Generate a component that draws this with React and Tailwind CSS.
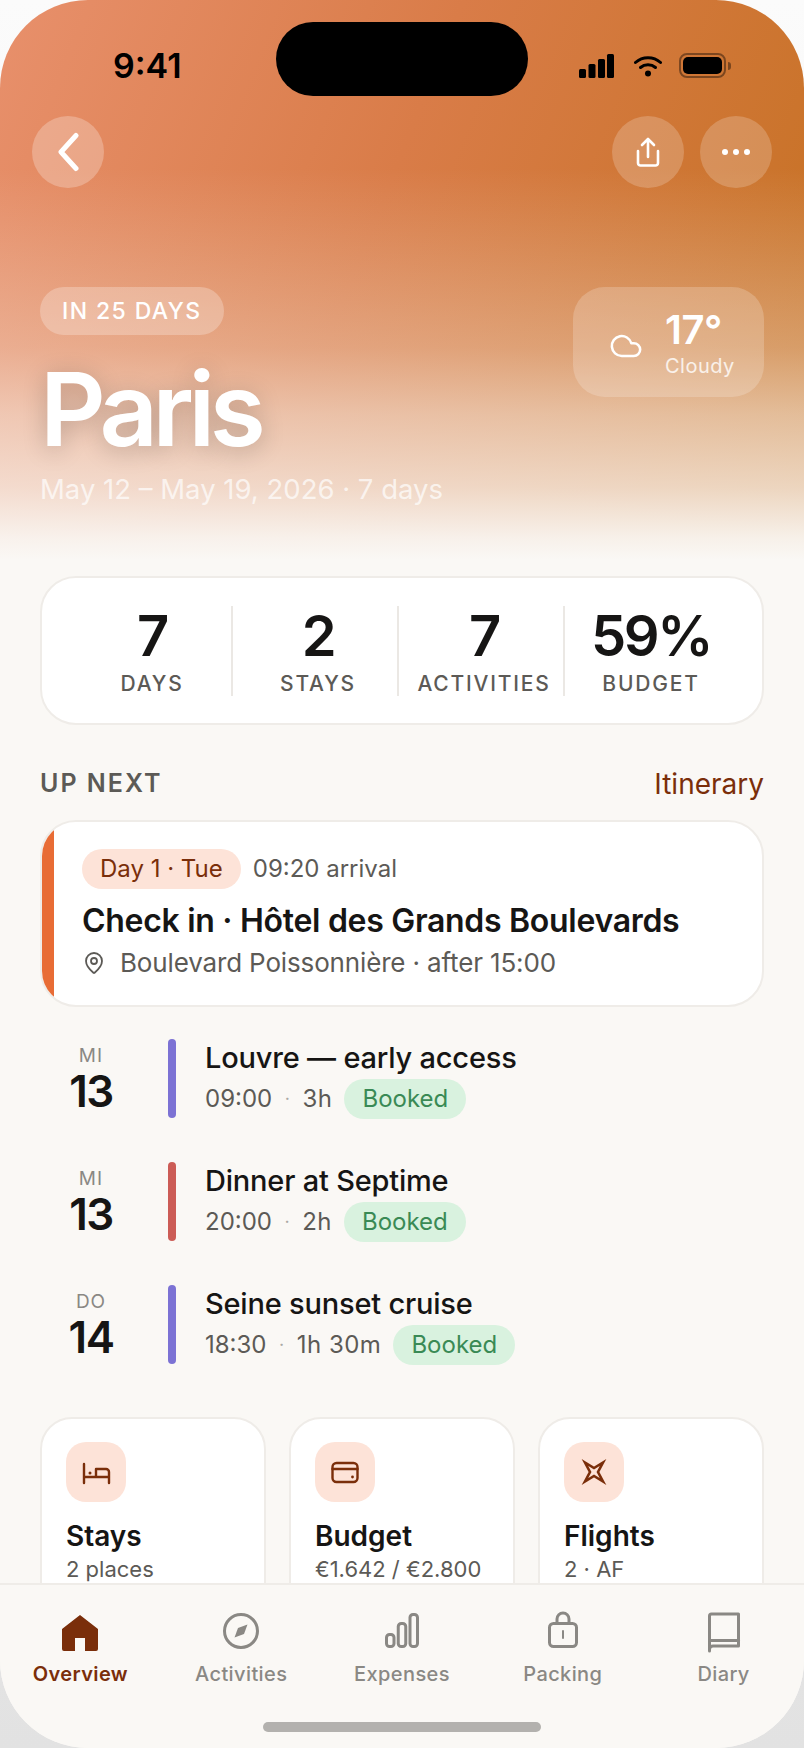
import React from 'react';
import { Cloud, MapPin } from 'lucide-react';

const stats = [
  { value: '7', label: 'DAYS' },
  { value: '2', label: 'STAYS' },
  { value: '7', label: 'ACTIVITIES' },
  { value: '59%', label: 'BUDGET' },
];

const plans = [
  { dow: 'MI', day: '13', title: 'Louvre — early access', time: '09:00', length: '3h', bar: 'bg-[#7c72d4]' },
  { dow: 'MI', day: '13', title: 'Dinner at Septime', time: '20:00', length: '2h', bar: 'bg-[#cc5c56]' },
  { dow: 'DO', day: '14', title: 'Seine sunset cruise', time: '18:30', length: '1h 30m', bar: 'bg-[#7c72d4]' },
];

const BedIcon = () => (
  <svg width="32" height="32" viewBox="0 0 32 32" fill="none" stroke="#7a2e0a" strokeWidth="2.4" strokeLinecap="round" strokeLinejoin="round">
    <path d="M4 8v19M4 21h25M29 27V16a3 3 0 0 0-3-3H16v8" />
    <circle cx="10" cy="17" r="1.5" fill="#7a2e0a" stroke="none" />
  </svg>
);

const WalletIcon = () => (
  <svg width="32" height="32" viewBox="0 0 32 32" fill="none" stroke="#7a2e0a" strokeWidth="2.4" strokeLinecap="round">
    <rect x="3.500" y="7" width="25" height="19" rx="4" />
    <path d="M3.500 13h25" />
    <circle cx="23.500" cy="21" r="1.4" fill="#7a2e0a" stroke="none" />
  </svg>
);

const StarIcon = () => (
  <svg width="32" height="32" viewBox="0 0 32 32" fill="none" stroke="#7a2e0a" strokeWidth="2.6" strokeLinejoin="miter">
    <path d="M7 6.500 L16 12 L25 6.500 L20 16 L25 25.500 L16 20 L7 25.500 L12 16 Z" />
  </svg>
);

const tileIcons = { bed: BedIcon, wallet: WalletIcon, star: StarIcon };

const tiles = [
  { title: 'Stays', sub: '2 places', icon: 'bed' },
  { title: 'Budget', sub: '€1.642 / €2.800', icon: 'wallet' },
  { title: 'Flights', sub: '2 · AF', icon: 'star' },
];

const HomeIcon = () => (
  <svg width="44" height="44" viewBox="0 0 44 44" fill="#7a2e0a">
    <path d="M22 6 L40 20 V40 a2 2 0 0 1-2 2 H27 V29 H17 V42 H6 a2 2 0 0 1-2-2 V20 Z" />
  </svg>
);

const CompassIcon = () => (
  <svg width="44" height="44" viewBox="0 0 44 44" fill="none" stroke="#8a8884" strokeWidth="3">
    <circle cx="22" cy="22" r="16.500" />
    <path d="M28.500 15.500 L25 25 L15.500 28.500 L19 19 Z" fill="#8a8884" stroke="none" />
  </svg>
);

const BarsIcon = () => (
  <svg width="44" height="44" viewBox="0 0 44 44" fill="none" stroke="#8a8884" strokeWidth="3">
    <rect x="6.500" y="25.500" width="7.500" height="12" rx="3" />
    <rect x="18.250" y="14.500" width="7.500" height="23" rx="3" />
    <rect x="30" y="5.500" width="7.500" height="32" rx="3" />
  </svg>
);

const PackIcon = () => (
  <svg width="44" height="44" viewBox="0 0 44 44" fill="none" stroke="#8a8884" strokeWidth="3" strokeLinecap="round">
    <rect x="8.500" y="14.500" width="27" height="23" rx="4" />
    <path d="M16 14v-4a6 6 0 0 1 12 0v4" />
    <path d="M22 22v7" strokeWidth="2" />
  </svg>
);

const BookIcon = () => (
  <svg width="44" height="44" viewBox="0 0 44 44" fill="none" stroke="#8a8884" strokeWidth="3" strokeLinecap="round" strokeLinejoin="round">
    <path d="M7.500 42V7a2 2 0 0 1 2-2h27v32H11a3.500 3.500 0 0 0-3.500 3.500" />
    <path d="M8 31.500h28.500" />
  </svg>
);

const tabs = [
  { label: 'Overview', Icon: HomeIcon, active: true },
  { label: 'Activities', Icon: CompassIcon },
  { label: 'Expenses', Icon: BarsIcon },
  { label: 'Packing', Icon: PackIcon },
  { label: 'Diary', Icon: BookIcon },
];

const StatusIcons = () => (
  <div className="flex items-center gap-[20px]">
    <svg width="35" height="24" viewBox="0 0 35 24" fill="#000">
      <rect x="0" y="15" width="7" height="9" rx="1.500" />
      <rect x="9.500" y="10" width="7" height="14" rx="1.500" />
      <rect x="19" y="5" width="7" height="19" rx="1.500" />
      <rect x="28" y="0" width="7" height="24" rx="1.500" />
    </svg>
    <svg width="28" height="22" viewBox="0 0 28 22" fill="none" stroke="#000" strokeWidth="3" strokeLinecap="round">
      <path d="M1.500 7.500C8.500 1 19.500 1 26.500 7.500" />
      <path d="M6.500 12.500c4.200-3.600 10.800-3.600 15 0" />
      <circle cx="14" cy="18.500" r="3" fill="#000" stroke="none" />
    </svg>
    <div className="flex items-center gap-[2px] -ml-[3px]">
      <div className="w-[47px] h-[25px] rounded-[8px] border-2 border-black/40 p-[2px]">
        <div className="w-full h-full rounded-[5px] bg-black" />
      </div>
      <div className="w-[3px] h-[8px] rounded-r-sm bg-black/40" />
    </div>
  </div>
);

const RoundButton = ({ children, className }) => (
  <button className={`w-[72px] h-[72px] rounded-full flex items-center justify-center ${className}`}>{children}</button>
);

const Hero = () => (
  <div className="relative h-[560px] bg-[linear-gradient(180deg,rgba(250,248,245,0)_30%,rgba(250,248,245,0.32)_62%,rgba(250,248,245,0.56)_74%,rgba(250,248,245,0.74)_87%,rgba(250,248,245,0.94)_96%,#faf8f5_100%),linear-gradient(112deg,#e8906c_0%,#d97c48_45%,#c4701f_100%)]">
    <div className="absolute left-[276px] top-[22px] w-[252px] h-[74px] rounded-[37px] bg-black" />
    <div className="h-[116px] flex items-start justify-between pl-[113px] pr-[73px] pt-[46px]">
      <span className="text-[34px] leading-[40px] font-semibold text-black">9:41</span>
      <div className="pt-[7px]">
        <StatusIcons />
      </div>
    </div>
    <div className="flex items-center justify-between px-8">
      <RoundButton className="bg-white/25">
        <svg width="26" height="40" viewBox="0 0 26 40" fill="none" stroke="#fff" strokeWidth="5" strokeLinecap="round" strokeLinejoin="round">
          <path d="M21 3.500 L6 20 L21 36.500" />
        </svg>
      </RoundButton>
      <div className="flex gap-4">
        <RoundButton className="bg-white/20">
          <svg width="24" height="30" viewBox="0 0 24 30" fill="none" stroke="#fff" strokeWidth="2.600" strokeLinecap="round" strokeLinejoin="round">
            <path d="M12 20V2M6 8l6-6 6 6" />
            <path d="M2 14v12a2.500 2.500 0 0 0 2.500 2.500h15A2.500 2.500 0 0 0 22 26V14" />
          </svg>
        </RoundButton>
        <RoundButton className="bg-white/20 gap-[5px]">
          <span className="w-[6px] h-[6px] rounded-full bg-white" />
          <span className="w-[6px] h-[6px] rounded-full bg-white" />
          <span className="w-[6px] h-[6px] rounded-full bg-white" />
        </RoundButton>
      </div>
    </div>
    <div className="flex items-start justify-between px-10 mt-[99px]">
      <div>
        <div className="inline-flex items-center h-[48px] px-[22px] rounded-[24px] bg-white/25 text-white text-[23px] font-medium tracking-[1.400px]">
          IN 25 DAYS
        </div>
        <h1 className="mt-[18px] text-[102px] leading-[112px] font-semibold tracking-[-5.500px] text-white [text-shadow:0_4px_24px_rgba(0,0,0,0.22)]">Paris</h1>
        <p className="mt-[7px] text-[27.500px] leading-[34px] text-white/70">May 12 – May 19, 2026 · 7 days</p>
      </div>
      <div className="w-[191px] h-[110px] rounded-[32px] bg-white/20 flex items-center pl-[36px] gap-[22px]">
        <Cloud size={34} color="#fff" strokeWidth={1.800} className="mt-[8px]" />
        <div className="pt-[2px]">
          <div className="text-[40px] leading-[46px] font-semibold text-white tracking-[-0.500px]">17°</div>
          <div className="text-[20px] leading-[26px] text-white/80 tracking-[0.500px]">Cloudy</div>
        </div>
      </div>
    </div>
  </div>
);

const StatsCard = () => (
  <div className="mx-10 mt-[16px] h-[149px] rounded-[36px] bg-white border-2 border-[#efece8] flex items-center pl-[25px]">
    {stats.map((s, i) => (
      <div key={s.label} className={`w-[166px] h-[90px] pl-[6px] flex flex-col items-center ${i < 3 ? 'border-r-2 border-[#ebe8e4]' : ''}`}>
        <div className="text-[56px] leading-[60px] font-semibold tracking-[-2.500px] text-[#161514]">{s.value}</div>
        <div className="mt-[4px] text-[21px] leading-[28px] font-medium tracking-[1.800px] text-[#5c5a56]">{s.label}</div>
      </div>
    ))}
  </div>
);

const NextCard = () => (
  <div className="mx-10 mt-[17px] h-[187px] rounded-[36px] bg-white border-2 border-[#efece8] flex overflow-hidden">
    <div className="w-[12px] shrink-0 bg-[#e86c35]" />
    <div className="pl-[28px] pt-[27px]">
      <div className="flex items-center gap-[12px]">
        <span className="h-[40px] px-[18px] rounded-[20px] bg-[#fde3d8] text-[#7a2e0a] text-[24px] leading-[40px]">Day 1 · Tue</span>
        <span className="text-[24px] text-[#5c5a56]">09:20 arrival</span>
      </div>
      <div className="mt-[10px] text-[32px] leading-[44px] font-semibold tracking-[-0.300px] text-[#161514]">Check in · Hôtel des Grands Boulevards</div>
      <div className="mt-[3px] flex items-center gap-[14px] text-[26px] leading-[34px] tracking-[-0.150px] text-[#5c5a56]">
        <MapPin size={24} strokeWidth={1.800} />
        <span>Boulevard Poissonnière · after 15:00</span>
      </div>
    </div>
  </div>
);

const PlanRow = ({ plan }) => (
  <div className="flex h-[79px]">
    <div className="w-[100px] ml-[41px] flex flex-col items-center">
      <div className="text-[19px] leading-[24px] text-[#8a8884] tracking-[1px] mt-[5px]">{plan.dow}</div>
      <div className="text-[44px] leading-[46px] font-semibold text-[#161514] tracking-[-1.500px]">{plan.day}</div>
    </div>
    <div className={`ml-[27px] w-[8px] rounded-full ${plan.bar}`} />
    <div className="ml-[29px]">
      <div className="text-[29px] leading-[38px] font-medium tracking-[-0.200px] text-[#161514]">{plan.title}</div>
      <div className="flex items-center h-[41px] mt-[1px] text-[24px] text-[#5c5a56]">
        <span>{plan.time}</span>
        <span className="mx-[12.500px] text-[#aaa8a4] text-[18px]">·</span>
        <span className="tracking-[0.500px]">{plan.length}</span>
        <span className="ml-[12px] h-[40px] px-[18px] rounded-[20px] bg-[#d9f2df] text-[#3a8a55] leading-[40px]">Booked</span>
      </div>
    </div>
  </div>
);

const Tile = ({ tile }) => {
  const Icon = tileIcons[tile.icon];
  return (
    <div className="h-[220px] rounded-[32px] bg-white border-2 border-[#efece8] pl-[24px] pt-[23px]">
      <div className="w-[60px] h-[60px] rounded-[20px] bg-[#fde3d8] flex items-center justify-center">
        <Icon />
      </div>
      <div className="mt-[16px] text-[28px] leading-[36px] font-semibold text-[#161514]">{tile.title}</div>
      <div className="text-[22px] leading-[30px] text-[#5c5a56]">{tile.sub}</div>
    </div>
  );
};

const TabBar = () => (
  <div className="relative h-[165px] shrink-0 bg-[#faf8f5] border-t-2 border-[#efece8] flex items-start pt-[24px]">
    {tabs.map(({ label, Icon, active }) => (
      <div key={label} className="flex-1 flex flex-col items-center">
        <Icon />
        <div className={`mt-[7px] text-[20px] leading-[28px] tracking-[0.400px] ${active ? 'font-semibold text-[#7a2e0a]' : 'font-medium text-[#8a8884]'}`}>{label}</div>
      </div>
    ))}
    <div className="absolute left-[263px] bottom-[16px] w-[278px] h-[10px] rounded-full bg-[#b3b1ae]" />
  </div>
);

export default function App() {
  return (
    <div className="w-[804px] h-[1748px] bg-[linear-gradient(180deg,#fbfbfb,#e2e2e2)] font-['Inter',sans-serif]">
      <div className="w-full h-full rounded-[88px] overflow-hidden bg-[#faf8f5] flex flex-col">
        <div className="flex-1 min-h-0 overflow-hidden">
          <Hero />
          <StatsCard />
          <div className="mx-10 mt-[40px] flex items-center justify-between h-[38px]">
            <span className="text-[25px] font-semibold tracking-[2px] text-[#5c5a56]">UP NEXT</span>
            <span className="text-[28px] text-[#7a2e0a]">Itinerary</span>
          </div>
          <NextCard />
          <div className="mt-[32px] flex flex-col gap-[44px]">
            {plans.map((p) => (
              <PlanRow key={p.title} plan={p} />
            ))}
          </div>
          <div className="mx-10 mt-[53px] grid grid-cols-3 gap-[23px]">
            {tiles.map((t) => (
              <Tile key={t.title} tile={t} />
            ))}
          </div>
        </div>
        <TabBar />
      </div>
    </div>
  );
}
